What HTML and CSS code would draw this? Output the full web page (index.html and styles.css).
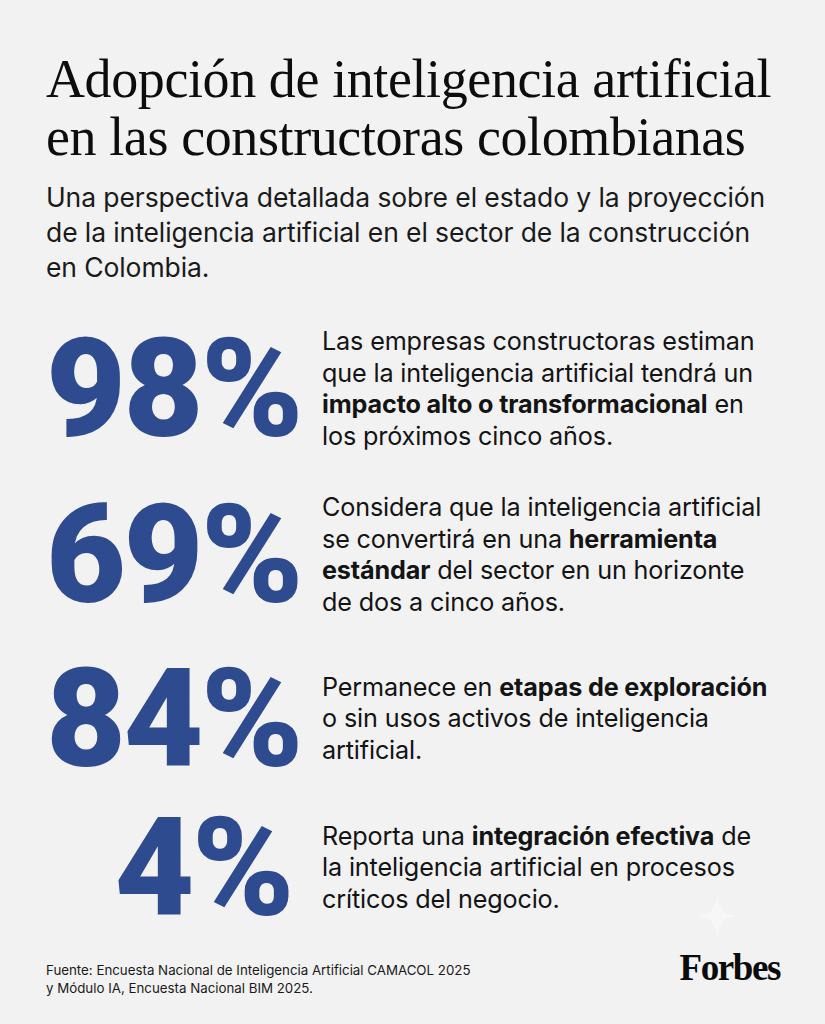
FILE: index.html
```html
<!DOCTYPE html>
<html lang="es">
<head>
<meta charset="utf-8">
<title>Adopción de inteligencia artificial</title>
<link rel="stylesheet" href="styles.css">
</head>
<body>
<main class="page">
  <header class="intro">
    <h1 class="title">Adopción de inteligencia artificial en las constructoras colombianas</h1>
    <p class="subtitle">Una perspectiva detallada sobre el estado y la proyección de la inteligencia artificial en el sector de la construcción en Colombia.</p>
  </header>

  <section class="stats">
    <div class="stat stat-1">
      <div class="num">98%</div>
      <p class="desc">Las empresas constructoras estiman que la inteligencia artificial tendrá un <b>impacto alto o transformacional</b> en los próximos cinco años.</p>
    </div>
    <div class="stat stat-2">
      <div class="num">69%</div>
      <p class="desc">Considera que la inteligencia artificial se convertirá en una <b>herramienta estándar</b> del sector en un horizonte de dos a cinco años.</p>
    </div>
    <div class="stat stat-3">
      <div class="num">84%</div>
      <p class="desc">Permanece en <b>etapas de exploración</b> o sin usos activos de inteligencia artificial.</p>
    </div>
    <div class="stat stat-4">
      <div class="num">4%</div>
      <p class="desc">Reporta una <b>integración efectiva</b> de la inteligencia artificial en procesos críticos del negocio.</p>
    </div>
  </section>

  <footer class="foot">
    <p class="source">Fuente: Encuesta Nacional de Inteligencia Artificial CAMACOL 2025<br>y Módulo IA, Encuesta Nacional BIM 2025.</p>
    <div class="brand">
      <svg class="sparkle" viewBox="0 0 40 40" width="40" height="40" aria-hidden="true"><path d="M20 0 C21 13 27 19 40 20 C27 21 21 27 20 40 C19 27 13 21 0 20 C13 19 19 13 20 0 Z" fill="#f7f7f7"/></svg>
      <span class="logo">Forbes</span>
    </div>
  </footer>
</main>
</body>
</html>
```

FILE: styles.css
```css
html, body {
  margin: 0;
  padding: 0;
  background: #f2f2f2;
}

.page {
  width: 825px;
  height: 1024px;
  box-sizing: border-box;
  padding: 50px 40px 0 46px;
  color: #111;
  font-family: Inter, Roboto, "Liberation Sans", sans-serif;
}

.title {
  margin: 0;
  font-family: "Liberation Serif", "DejaVu Serif", serif;
  font-weight: 400;
  font-size: 54px;
  line-height: 58px;
  letter-spacing: -0.4px;
  color: #0d0d0d;
}

.subtitle {
  margin: 14px 0 0;
  font-size: 26.5px;
  line-height: 35px;
  letter-spacing: -0.1px;
  color: #1a1a1a;
}

.stats {
  display: flex;
  flex-direction: column;
  margin-top: 41px;
}

.stat {
  display: grid;
  grid-template-columns: 246px 452px;
  column-gap: 30px;
  align-items: center;
}

.stat-2 { margin-top: 40px; }
.stat-3 { margin-top: 46px; }
.stat-4 { margin-top: 39px; }

.num {
  text-align: right;
  font-family: Roboto, Inter, sans-serif;
  font-weight: 900;
  font-size: 138px;
  line-height: 110px;
  letter-spacing: -2.5px;
  color: #2f4b8f;
}

.desc {
  margin: 0;
  font-size: 25.2px;
  line-height: 31.5px;
  letter-spacing: -0.15px;
  color: #141414;
}

.desc b {
  font-weight: 700;
}

.foot {
  display: flex;
  justify-content: space-between;
  align-items: flex-end;
  margin-top: 30px;
  padding-right: 5px;
}

.source {
  margin: 0;
  font-size: 13.3px;
  line-height: 17.5px;
  color: #1a1a1a;
}

.brand {
  position: relative;
}

.sparkle {
  position: absolute;
  left: 18px;
  top: -57px;
}

.logo {
  display: block;
  font-family: "Liberation Serif", serif;
  font-weight: 700;
  font-size: 37px;
  line-height: 30px;
  letter-spacing: -1.4px;
  color: #0b0b0b;
  margin-bottom: 14px;
}
```
